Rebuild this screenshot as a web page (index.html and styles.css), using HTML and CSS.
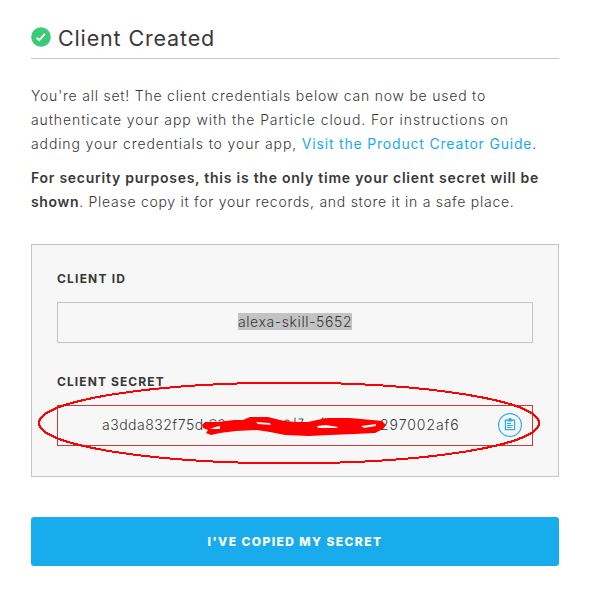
FILE: index.html
```
<!DOCTYPE html>
<html lang="en">
<head>
<meta charset="utf-8">
<title>Client Created</title>
<link rel="stylesheet" href="styles.css">
</head>
<body>
<main class="dialog">
  <header class="heading">
    <svg class="check" viewBox="0 0 20 20"><circle cx="10" cy="10" r="9.8" fill="#3bcb78"/><path d="M5.6 10.7l2.7 2.5 5.5-6.3" fill="none" stroke="#fff" stroke-width="1.9"/></svg>
    <h1>Client Created</h1>
  </header>
  <p class="copy"><span class="l1">You're all set! The client credentials below can now be used to</span><br><span class="l2">authenticate your app with the Particle cloud. For instructions on</span><br><span class="l3">adding your credentials to your app, </span><a>Visit the Product Creator Guide</a>.</p>
  <p class="copy"><strong class="l4">For security purposes, this is the only time your client secret will be</strong><br><strong class="l5">shown</strong><span class="l6">. Please copy it for your records, and store it in a safe place.</span></p>
  <section class="panel">
    <h2 class="label-id">CLIENT ID</h2>
    <div class="field"><span class="selected">alexa-skill-5652</span></div>
    <h2 class="label-secret">CLIENT SECRET</h2>
    <div class="field secret">
      <span class="start">a3dda832f75d</span><span class="end">297002af6</span>
      <svg class="copy-icon" viewBox="0 0 24 24" fill="none" stroke="#29b0e8"><circle cx="12" cy="12" r="11.4" stroke-width="1.2"/><path d="M9.5 7.2H7.4v9.5h9.2V7.2h-2.1" stroke-width="1.2"/><path d="M9.3 6.3h1.4V5h2.6v1.3h1.4v2.2H9.3z" fill="#29b0e8" stroke="none"/><path d="M9 10.5h4M9 12.5h6M9 14.5h4.5" stroke-width="1.2"/></svg>
    </div>
  </section>
  <button class="confirm">I'VE COPIED MY SECRET</button>
</main>
<svg class="markup" viewBox="0 0 589 591" fill="none" stroke="#f00" stroke-linecap="round" stroke-linejoin="round">
  <ellipse cx="289" cy="423" rx="250" ry="40.3" stroke-width="2" shape-rendering="crispEdges"/>
  <path stroke="#555" stroke-width="1.1" d="M210 421q3-3 6 0M219 421q3-3 5 0M285 421q2-2 4 0M295 418v5M299 419h4l-2 5M321 420l2-2M325 418v4"/>
  <path fill="#f00" stroke="none" fill-rule="evenodd" d="M202 425L205 422 218 422 234 420 243 420 250 417 268 417 280 420 285 421 296 422 308 422 317 420 328 418 350 418 372 420 382 421 386 425 383 429 375 433 354 434 330 435 309 436 285 435 270 432 257 430 236 431 220 433 211 435 206 433 208 430 203 428zM210 429L215 427 220 426 220 429zM256 422L270 423 271 425 258 424zM317 426L326 425 338 427 337 428 318 428zM361 426L376 424 376 426 364 428z"/>
</svg>
</body>
</html>
```
FILE: styles.css
```
* { box-sizing: border-box; }
body { margin: 0; width: 589px; height: 591px; position: relative; background: #fff; color: #383838; font-family: Inter, "Liberation Sans", sans-serif; overflow: hidden; }
.dialog { padding: 16px 30px 0 31px; }
.heading { display: flex; align-items: center; gap: 7px; height: 43px; border-bottom: 1px solid #c5c5c5; margin-bottom: 25px; }
.check { width: 20px; height: 20px; flex: none; }
h1 { margin: 0; padding-top: 1px; font-size: 21.5px; font-weight: 400; letter-spacing: .85px; line-height: 28px; }
.copy { margin: 0 0 10px; font-size: 14px; line-height: 24px; font-weight: 300; white-space: nowrap; letter-spacing: .45px; }
.copy strong { font-weight: 600; }
.copy a { color: #18acec; font-weight: 400; letter-spacing: .81px; }
.l1 { letter-spacing: .78px; }
.l2 { letter-spacing: .91px; }
.l3 { letter-spacing: .88px; }
.l4 { letter-spacing: .75px; }
.l5 { letter-spacing: .65px; }
.l6 { letter-spacing: .73px; }
.panel { margin-top: 30px; height: 233px; border: 1px solid #c5c5c5; background: #f7f7f7; padding: 25px 25px 0; }
h2 { margin: 0 0 14px; font-size: 12px; line-height: 18px; font-weight: 700; letter-spacing: 1.2px; }
.label-secret { letter-spacing: 1.1px; }
.field { height: 41px; border: 1px solid #c5c5c5; display: flex; align-items: center; justify-content: center; padding-bottom: 2px; font-size: 14px; font-weight: 350; letter-spacing: .6px; margin-bottom: 30px; }
.selected { background: #c3c3c3; line-height: 17px; }
.secret { border-color: #cb3a3a; justify-content: flex-start; padding: 0 10px 2px 44px; }
.start { width: 278px; letter-spacing: .5px; }
.end { letter-spacing: .95px; }
.copy-icon { width: 24px; height: 24px; margin: 1px 0 0 auto; }
.confirm { display: block; width: 100%; height: 49px; margin-top: 40px; border: 0; border-radius: 3px; background: #18acec; color: #fff; font: 800 12px/18px Inter, sans-serif; letter-spacing: 1.4px; }
.markup { position: absolute; left: 0; top: 0; width: 589px; height: 591px; pointer-events: none; }
```
